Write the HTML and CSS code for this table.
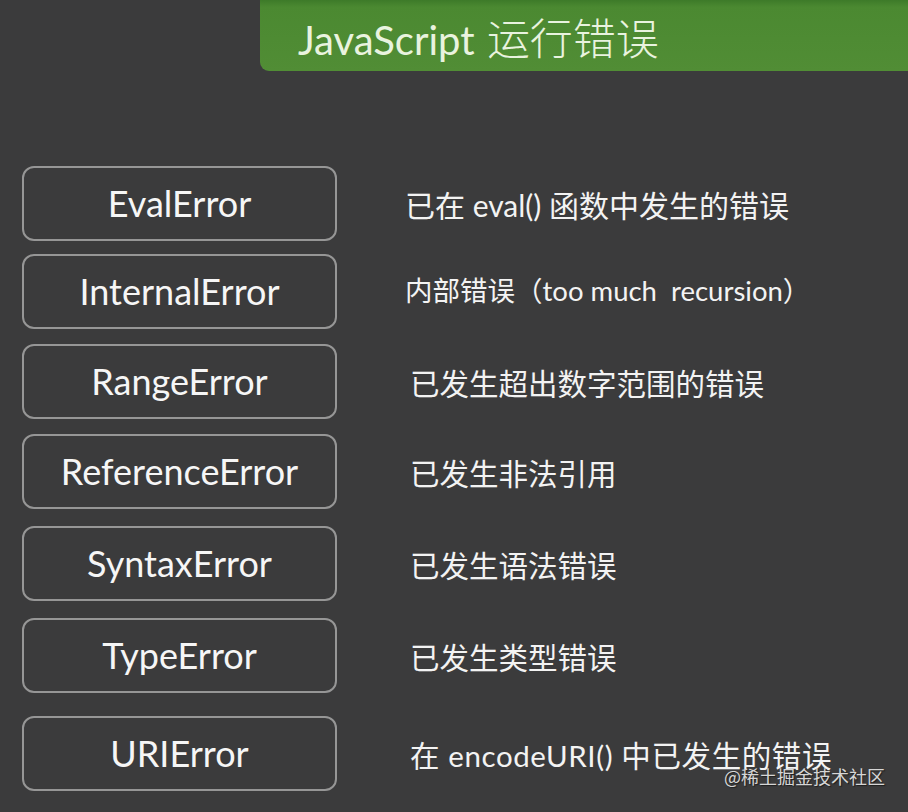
FILE: index.html
```html
<!DOCTYPE html>
<html lang="zh-CN">
<head>
<meta charset="utf-8">
<title>JavaScript 运行错误</title>
<link rel="stylesheet" href="styles.css">
</head>
<body>
<div class="slide">
  <header class="banner">
    <h1 class="title">JavaScript <span class="title-cjk">运行错误</span></h1>
  </header>
  <main class="list">
    <div class="row">
      <div class="box">EvalError</div>
      <div class="desc desc-a">已在 eval() 函数中发生的错误</div>
    </div>
    <div class="row">
      <div class="box">InternalError</div>
      <div class="desc desc-a desc-small">内部错误（too much&nbsp; recursion）</div>
    </div>
    <div class="row row-g2">
      <div class="box">RangeError</div>
      <div class="desc">已发生超出数字范围的错误</div>
    </div>
    <div class="row row-g2">
      <div class="box">ReferenceError</div>
      <div class="desc">已发生非法引用</div>
    </div>
    <div class="row row-g3">
      <div class="box">SyntaxError</div>
      <div class="desc">已发生语法错误</div>
    </div>
    <div class="row row-g3">
      <div class="box">TypeError</div>
      <div class="desc">已发生类型错误</div>
    </div>
    <div class="row row-g4">
      <div class="box">URIError</div>
      <div class="desc desc-wide">在 encodeURI() 中已发生的错误</div>
    </div>
  </main>
  <div class="watermark">@稀土掘金技术社区</div>
</div>
</body>
</html>
```

FILE: styles.css
```css
html, body {
  margin: 0;
  padding: 0;
  background: #3b3b3c;
}
.slide {
  position: relative;
  width: 908px;
  height: 812px;
  overflow: hidden;
  background: #3b3b3c;
  font-family: "Lato", "Noto Sans CJK SC", sans-serif;
  color: #f3f3f3;
}
.banner {
  margin-left: 260px;
  height: 71px;
  background: linear-gradient(180deg, #3d7a29 0%, #4b8931 10%, #518d35 100%);
  border-bottom-left-radius: 9px;
  display: flex;
  align-items: center;
  padding-left: 38px;
  box-sizing: border-box;
}
.title {
  margin: 0;
  font-weight: 400;
  font-size: 40px;
  color: #e9f3df;
  line-height: 1;
  padding-top: 4px;
  white-space: nowrap;
}
.title-cjk {
  font-family: "Noto Sans CJK SC", sans-serif;
  font-weight: 300;
  font-size: 43px;
  margin-left: 2px;
}
.list {
  display: flex;
  flex-direction: column;
  padding-top: 95px;
  padding-left: 22px;
  gap: 13px;
}
.row {
  display: flex;
  align-items: center;
  height: 75px;
}
.row-g2 { margin-top: 2px; }
.row-g3 { margin-top: 4px; }
.row-g4 { margin-top: 10px; }
.box {
  width: 315px;
  height: 75px;
  box-sizing: border-box;
  border: 2px solid #969696;
  border-radius: 12px;
  display: flex;
  align-items: center;
  justify-content: center;
  font-size: 36px;
  color: #f6f6f6;
  flex-shrink: 0;
  padding-bottom: 2px;
}
.desc {
  margin-left: 73px;
  font-size: 29.5px;
  color: #f3f3f3;
  white-space: nowrap;
}
.desc-a { margin-left: 68px; font-size: 30px; }
.desc-small { font-size: 27.5px; padding-bottom: 6px; }
.desc-wide { letter-spacing: 0.6px; }
.watermark {
  position: absolute;
  left: 724px;
  top: 766px;
  font-family: "Noto Sans CJK SC", sans-serif;
  font-size: 18px;
  color: #d6d6d6;
  text-shadow: 1px 1px 1px #1e1e1e;
  line-height: 1.2;
}
```
